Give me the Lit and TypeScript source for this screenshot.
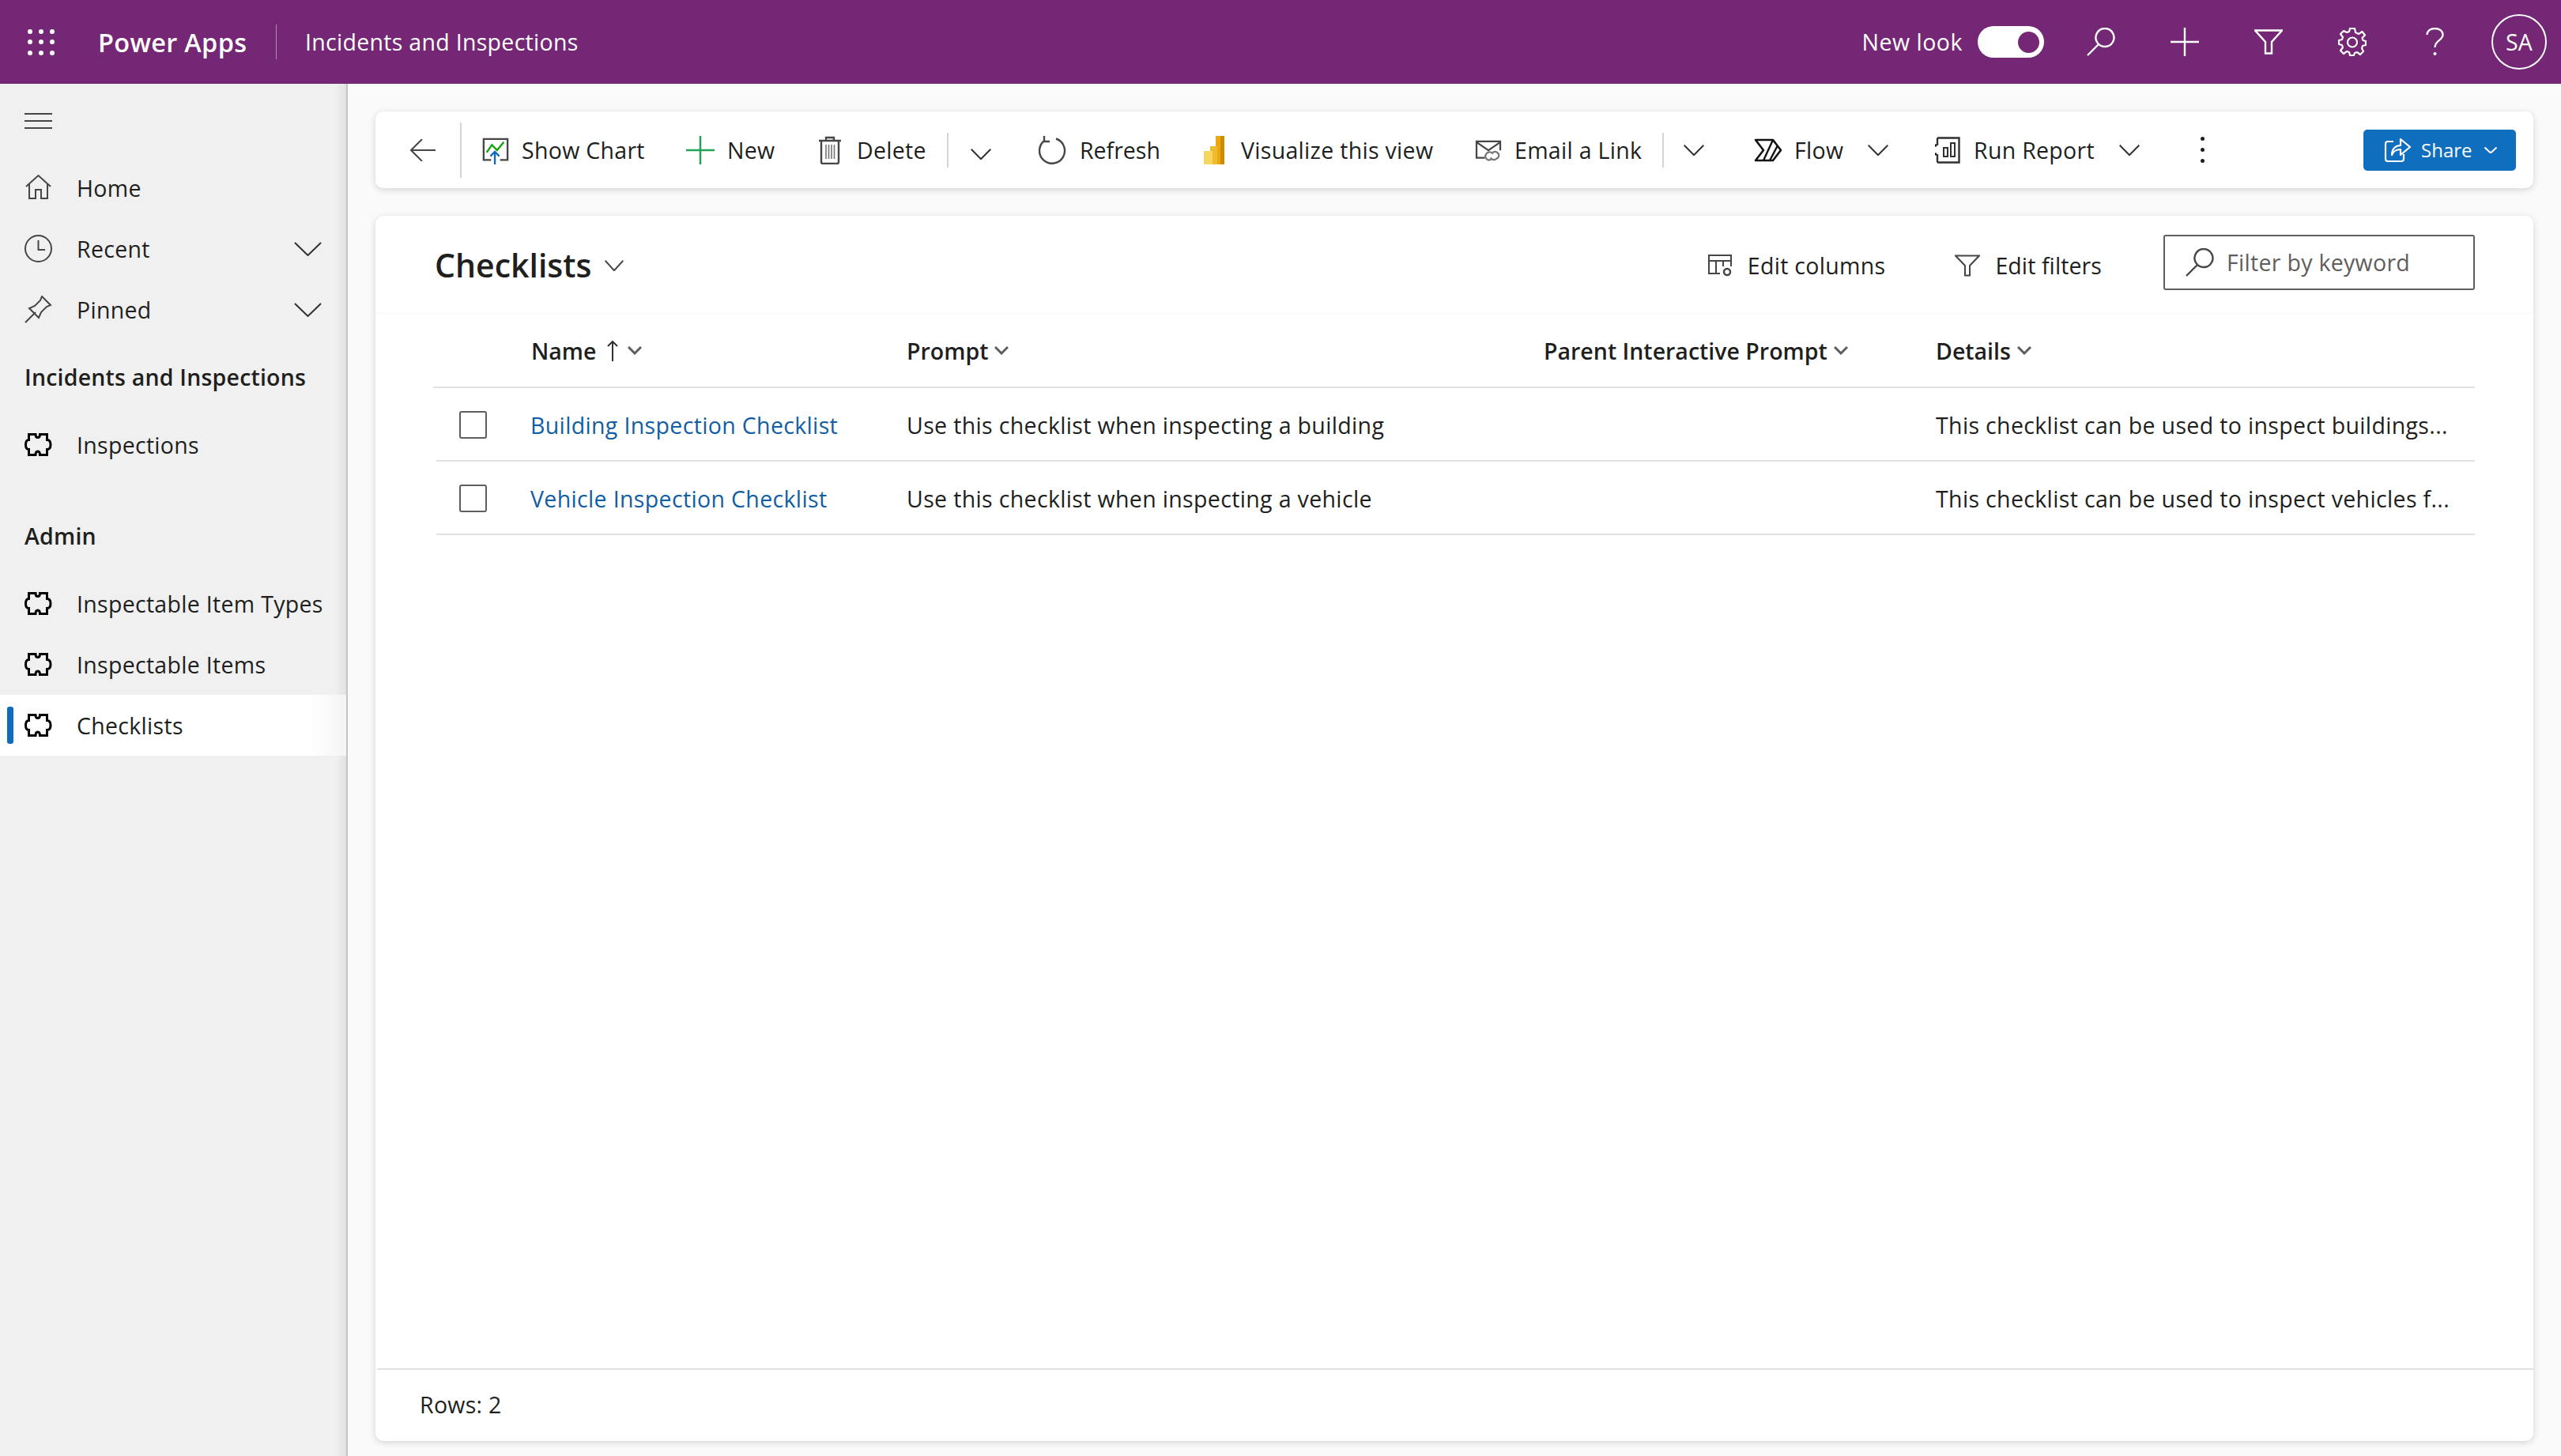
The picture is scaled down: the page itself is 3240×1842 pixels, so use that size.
import { LitElement, html, css, svg } from "lit";
import { customElement } from "lit/decorators.js";

const chevron = (w: number, h: number, c = "#323130") => html`<svg width=${w} height=${h} viewBox="0 0 36 18" preserveAspectRatio="none"><path d="M1 1 L18 17 L35 1" fill="none" stroke=${c} stroke-width="2" vector-effect="non-scaling-stroke"/></svg>`;

const puzzle = html`<svg width="35" height="29" viewBox="0 0 35 29"><path d="M5.500 1.500H14C14 4 15 5.500 16.800 5.500S19.500 4 19.500 1.500H28.500V8.500C31.500 8.500 33 11 33 14.500S31.500 20.500 28.500 20.500V27.500H19.500C19.500 25 18.600 23 16.800 23S14 25 14 27.500H5.500V20.500C3 20.500 1.500 18 1.500 14.500S3 8.500 5.500 8.500Z" fill="none" stroke="#000" stroke-width="3"/></svg>`;

const navIcons: Record<string, unknown> = {
  home: html`<svg width="35" height="35" viewBox="0 0 35 35"><path d="M2 16 17.500 2 33 16M6 13V31H14V20H21V31H29V13" fill="none" stroke="#484644" stroke-width="2"/></svg>`,
  clock: html`<svg width="35" height="35" viewBox="0 0 35 35"><circle cx="17.500" cy="17.500" r="16.500" fill="none" stroke="#484644" stroke-width="2"/><path d="M17.500 7V19H26" fill="none" stroke="#484644" stroke-width="2"/></svg>`,
  pin: html`<svg width="35" height="35" viewBox="0 0 35 35"><path d="M1 34 14 21M22 1 33 12 28 14 21 21 18 28 6 16 13 13 20 6Z" fill="none" stroke="#484644" stroke-width="2"/></svg>`,
  puzzle,
};

const cmdIcons: Record<string, unknown> = {
  chart: html`<svg width="34" height="34" viewBox="0 0 36 36" style="margin-top:2px"><path d="M12 30H2V2H34V30H24" fill="none" stroke="#484644" stroke-width="2.500"/><path d="M6 20 13 10 20 17 29 6" fill="none" stroke="#13a10e" stroke-width="2.500"/><path d="M17 36V19M11 25 17 19 23 25" fill="none" stroke="#0f6cbd" stroke-width="2.500"/></svg>`,
  plus: html`<svg width="36" height="36" viewBox="0 0 36 36"><path d="M18 0V36M0 18H36" fill="none" stroke="#22a356" stroke-width="2.500"/></svg>`,
  trash: html`<svg width="28" height="36" viewBox="0 0 28 36"><path d="M0 6H28M9 6V2H19V6M3 6V33C3 34 4 35 5 35H23C24 35 25 34 25 33V6" fill="none" stroke="#484644" stroke-width="2.400"/><path d="M9 11V29M12.500 11V29M16 11V29M19.500 11V29" fill="none" stroke="#757575" stroke-width="1.600"/></svg>`,
  refresh: html`<svg width="36" height="36" viewBox="0 0 36 36"><path d="M22 3.500A16 16 0 1 1 8 5.500M7 0V7H14" fill="none" stroke="#484644" stroke-width="2.400"/></svg>`,
  bi: html`<svg width="26" height="36" viewBox="0 0 26 36"><rect x="17" y="0" width="9" height="36" fill="#d08a00"/><rect x="15" y="0" width="6" height="36" fill="#e8a915"/><rect x="8" y="13" width="9" height="23" fill="#eebc2c"/><rect x="0" y="19" width="11" height="17" fill="#f6d860"/></svg>`,
  mail: html`<svg width="36" height="30" viewBox="0 0 36 32" style="margin-top:5px"><path d="M13 24H2V2H34V14M2 3 18 14 34 3" fill="none" stroke="#484644" stroke-width="2.400"/><path d="M24 19A5 5 0 0 0 17 17L15 19A5 5 0 0 0 22 26M21 24A5 5 0 0 0 28 26L31 24A5 5 0 0 0 24 17" fill="none" stroke="#757575" stroke-width="2.400"/></svg>`,
  flow: html`<svg width="36" height="30" viewBox="0 0 36 30"><path d="M2 2H24L34 15 24 28H2L12 15Z" fill="none" stroke="#111" stroke-width="2.600" stroke-linejoin="round"/><path d="M24 2 12 28M30 9 20 28" fill="none" stroke="#111" stroke-width="2.400"/></svg>`,
  report: html`<svg width="32" height="34" viewBox="0 0 32 34"><path d="M3 1.500H30.500V32.500H3M3 1.500V11M3 22V32.500" fill="none" stroke="#323130" stroke-width="2.400"/><path d="M2 11H0M2 22H0" stroke="#111" stroke-width="3"/><rect x="11" y="14" width="5" height="11" fill="none" stroke="#323130" stroke-width="2"/><rect x="20" y="8" width="5" height="17" fill="none" stroke="#323130" stroke-width="2"/></svg>`,
};

const search = (c: string) => svg`<path d="M15 21 1 35M23 1A11.500 11.500 0 1 1 22.900 1Z" fill="none" stroke=${c} stroke-width="2.400"/>`;

const commands = [
  { icon: "chart", label: "Show Chart", text: 50, w: 258 },
  { icon: "plus", label: "New", text: 52, w: 168 },
  { icon: "trash", label: "Delete", text: 48, w: 162 },
  { sep: true, w: 30 },
  { chev: true, drop: true, w: 86 },
  { icon: "refresh", label: "Refresh", text: 52, w: 209, tight: true },
  { icon: "bi", label: "Visualize this view", text: 47, w: 342 },
  { icon: "mail", label: "Email a Link", text: 51, w: 238 },
  { sep: true, w: 27 },
  { chev: true, w: 89 },
  { icon: "flow", label: "Flow", text: 51, chevAt: 144, w: 229 },
  { icon: "report", label: "Run Report", text: 49, chevAt: 233, w: 338 },
];

const rows = [
  { name: "Building Inspection Checklist", prompt: "Use this checklist when inspecting a building", details: "This checklist can be used to inspect buildings..." },
  { name: "Vehicle Inspection Checklist", prompt: "Use this checklist when inspecting a vehicle", details: "This checklist can be used to inspect vehicles f..." },
];

@customElement("app-root")
export class AppRoot extends LitElement {
  static styles = css`
    :host {
      display: block;
      width: 3240px;
      height: 1842px;
      overflow: hidden;
      background: #fafafa;
      font-family: "Open Sans", "Noto Sans", sans-serif;
      font-size: 28.500px;
      letter-spacing: .3px;
      color: #201f1e;
    }
    svg { display: block; flex: none; }

    .top {
      height: 106px;
      background: #742774;
      color: #fff;
      display: flex;
      align-items: center;
    }
    .waffle {
      margin-left: 35px;
      width: 34px;
      height: 33px;
      display: grid;
      grid-template-columns: repeat(3, 6px);
      grid-auto-rows: 6px;
      justify-content: space-between;
      align-content: space-between;
    }
    .waffle i { background: #fff; border-radius: 50%; }
    .brand { margin-left: 55px; width: 225px; font-weight: 600; font-size: 32.500px; letter-spacing: .3px; }
    .vsep { width: 1px; height: 44px; background: rgba(255,255,255,.45); }
    .app { margin-left: 36px; flex: 1; }
    .newlook { margin-right: 19px; letter-spacing: .5px; }
    .toggle {
      width: 84px;
      height: 40px;
      border-radius: 20px;
      background: #fff;
      display: flex;
      align-items: center;
      justify-content: flex-end;
      padding-right: 6px;
      box-sizing: border-box;
    }
    .toggle i { width: 27px; height: 27px; border-radius: 50%; background: #742774; }
    .ticons { display: flex; align-items: center; margin-left: 54px; }
    .ticons > * { margin-right: 70px; }
    .ticons > .gear { margin-right: 75px; }
    .ticons > .help { margin-right: 60px; }
    .avatar {
      width: 70px;
      height: 70px;
      margin: 0 18px 0 0;
      border: 2px solid #fff;
      border-radius: 50%;
      box-sizing: border-box;
      display: flex;
      align-items: center;
      justify-content: center;
    }

    .body { display: flex; height: 1736px; }
    .nav {
      width: 440px;
      flex: none;
      box-sizing: border-box;
      border-right: 2px solid #c4c4c4;
      background: linear-gradient(to right, #f0f0f0 calc(100% - 14px), #e2e2e2);
    }
    .burger {
      height: 93px;
      padding-left: 31px;
      display: flex;
      flex-direction: column;
      justify-content: center;
      gap: 7px;
    }
    .burger i { width: 35px; height: 2px; background: #484644; }
    .nitem {
      height: 77px;
      display: flex;
      align-items: center;
      position: relative;
      padding-left: 31px;
    }
    .nitem .ic { width: 66px; flex: none; }
    .nitem .lb { flex: 1; }
    .nitem .ch { margin-right: 31px; }
    .nitem.on { background: linear-gradient(to right, #fff 90%, #f4f4f4); }
    .nitem.on::before {
      content: "";
      position: absolute;
      left: 9px;
      top: 15px;
      width: 8px;
      height: 47px;
      border-radius: 3px;
      background: #0f6cbd;
    }
    .nhead {
      height: 94px;
      display: flex;
      align-items: center;
      padding-left: 31px;
      font-weight: 600;
      letter-spacing: .2px;
    }
    .nhead.second { margin-top: 30px; }

    .main {
      flex: 1;
      padding: 35px 35px 19px;
      box-sizing: border-box;
      display: flex;
      flex-direction: column;
      gap: 35px;
    }
    .cmdbar {
      height: 97px;
      flex: none;
      background: #fff;
      border-radius: 10px;
      box-shadow: 0 2px 8px rgba(0,0,0,.16);
      display: flex;
      align-items: center;
      padding-left: 44px;
      position: relative;
    }
    .back { width: 63px; }
    .sep { width: 2px; height: 70px; background: #d4d4d4; }
    .seps { height: 44px; }
    .cmd { display: flex; align-items: center; flex: none; position: relative; }
    .cmd .ic { flex: none; }
    .cmd .cch { position: absolute; top: 50%; margin-top: -7px; }
    .cmd .tight { letter-spacing: 0; }
    .drop { margin-top: 10px; }
    .kebab { display: flex; flex-direction: column; gap: 9px; margin-left: -2px; }
    .kebab i { width: 5px; height: 5px; border-radius: 50%; background: #201f1e; }
    .share {
      margin-left: auto;
      margin-right: 22px;
      width: 193px;
      height: 52px;
      background: #106ebe;
      border-radius: 5px;
      color: #fff;
      display: flex;
      align-items: center;
      padding-left: 26px;
      box-sizing: border-box;
      font-size: 24px;
      font-weight: 500;
      letter-spacing: 0;
    }

    .card {
      flex: 1;
      background: #fff;
      border-radius: 10px;
      box-shadow: 0 2px 8px rgba(0,0,0,.16);
      display: flex;
      flex-direction: column;
    }
    .chead {
      height: 124px;
      flex: none;
      box-sizing: border-box;
      border-bottom: 1px solid #f6f6f6;
      display: flex;
      align-items: center;
      padding-left: 75px;
    }
    .title { font-size: 41px; font-weight: 600; width: 215px; letter-spacing: 0; }
    .tchev { margin-top: 2px; }
    .hact { display: flex; align-items: center; gap: 19px; padding-top: 2px; }
    .hact.cols { margin-right: 88px; }
    .hact.filt { margin-right: 78px; letter-spacing: .1px; }
    .filter {
      width: 394px;
      height: 70px;
      margin: -6px 74px 0 0;
      border: 2px solid #605e5c;
      border-radius: 3px;
      box-sizing: border-box;
      display: flex;
      align-items: center;
      padding-left: 26px;
      gap: 16px;
      color: #605e5c;
    }
    .table { flex: 1; padding: 0 74px 0 73px; }
    .thead, .trow {
      display: grid;
      grid-template-columns: 124px 475px 806px 496px 1fr;
      align-items: center;
    }
    .thead { height: 92px; border-bottom: 2px solid #e1e1e1; font-weight: 600; letter-spacing: 0; }
    .thead > div { display: flex; align-items: center; padding-top: 1px; }
    .trow {
      height: 91px;
      box-sizing: content-box;
      border-bottom: 2px solid #e1e1e1;
      margin-left: 4px;
      grid-template-columns: 120px 475px 806px 496px 1fr;
      letter-spacing: .35px;
    }
    .trow > div { padding-top: 2px; }
    .box { width: 35px; height: 35px; margin-left: 29px; border: 2px solid #605e5c; border-radius: 3px; box-sizing: border-box; }
    .link { color: #115ea3; margin-left: -1px; }
    .tfoot {
      height: 92px;
      flex: none;
      box-sizing: border-box;
      border-top: 2px solid #e1e1e1;
      display: flex;
      align-items: center;
      padding: 0 0 3px 54px;
      margin-left: 2px;
    }
  `;

  private _nav(icon: string, label: string, opts: { chev?: boolean; on?: boolean } = {}) {
    return html`<div class="nitem ${opts.on ? "on" : ""}">
      <div class="ic">${navIcons[icon]}</div>
      <div class="lb">${label}</div>
      ${opts.chev ? html`<div class="ch">${chevron(35, 18)}</div>` : ""}
    </div>`;
  }

  private _cmd(c: any) {
    if (c.sep) return html`<div class="cmd" style="width:${c.w}px"><div class="sep seps"></div></div>`;
    if (c.chev) return html`<div class="cmd ${c.drop ? "drop" : ""}" style="width:${c.w}px">${chevron(26, 14)}</div>`;
    return html`<div class="cmd" style="width:${c.w}px">
      <div class="ic" style="width:${c.text}px">${cmdIcons[c.icon]}</div>
      <span class=${c.tight ? "tight" : ""}>${c.label}</span>
      ${c.chevAt ? html`<div class="cch" style="left:${c.chevAt}px">${chevron(26, 14)}</div>` : ""}
    </div>`;
  }

  render() {
    return html`
      <div class="top">
        <div class="waffle">${Array.from({ length: 9 }, () => html`<i></i>`)}</div>
        <div class="brand">Power Apps</div>
        <div class="vsep"></div>
        <div class="app">Incidents and Inspections</div>
        <div class="newlook">New look</div>
        <div class="toggle"><i></i></div>
        <div class="ticons">
          <svg width="36" height="36" viewBox="0 0 36 36">${search("#fff")}</svg>
          <svg width="36" height="36" viewBox="0 0 36 36"><path d="M18 0V36M0 18H36" stroke="#fff" stroke-width="2.400"/></svg>
          <svg width="36" height="32" viewBox="0 0 36 32"><path d="M1 1.500H35L22 16V30.500H14V16Z" fill="none" stroke="#fff" stroke-width="2.400"/></svg>
          <svg class="gear" width="36" height="36" viewBox="0 0 36 36"><path d="M15 1H21L22 6 26 8 30.500 5 34 9.500 30.500 13 31.500 16 35 17V22L31 23 30 26 32 30 28 34 24 31 21 32 20 35H15L14 31 11 30 7 33 3 29 6 25 5 22 1 21V16L5 15 6 12 3 8 7 4 11 6 14 5Z" fill="none" stroke="#fff" stroke-width="2.200" stroke-linejoin="round"/><circle cx="18" cy="18.500" r="6" fill="none" stroke="#fff" stroke-width="2.200"/></svg>
          <svg class="help" width="23" height="36" viewBox="0 0 23 36"><path d="M1.500 9C1.500 4 6 1 11.500 1S21.500 4 21.500 9C21.500 16 11.500 16 11.500 25" fill="none" stroke="#fff" stroke-width="2.300"/><circle cx="11.500" cy="33" r="2" fill="#fff"/></svg>
        </div>
        <div class="avatar">SA</div>
      </div>
      <div class="body">
        <div class="nav">
          <div class="burger"><i></i><i></i><i></i></div>
          ${this._nav("home", "Home")}
          ${this._nav("clock", "Recent", { chev: true })}
          ${this._nav("pin", "Pinned", { chev: true })}
          <div class="nhead">Incidents and Inspections</div>
          ${this._nav("puzzle", "Inspections")}
          <div class="nhead second">Admin</div>
          ${this._nav("puzzle", "Inspectable Item Types")}
          ${this._nav("puzzle", "Inspectable Items")}
          ${this._nav("puzzle", "Checklists", { on: true })}
        </div>
        <div class="main">
          <div class="cmdbar">
            <div class="back"><svg width="32" height="28" viewBox="0 0 32 28"><path d="M32 14H1M15 0 1 14 15 28" fill="none" stroke="#484644" stroke-width="2"/></svg></div>
            <div class="sep"></div>
            <div style="width:26px"></div>
            ${commands.map((c) => this._cmd(c))}
            <div class="kebab"><i></i><i></i><i></i></div>
            <div class="share">
              <svg width="34" height="32" viewBox="0 0 34 32" style="margin-right:13px"><path d="M12 5H5C3 5 2 6 2 8V27C2 29 3 30 5 30H22C24 30 25 29 25 27V21M10 22C10 14 15 10 21 10V2L33 12 21 22V15C16 15 12 17 10 22Z" fill="none" stroke="#fff" stroke-width="2.200" stroke-linejoin="round"/></svg>
              <span>Share</span>
              <div style="margin-left:15px">${chevron(16, 8, "#fff")}</div>
            </div>
          </div>
          <div class="card">
            <div class="chead">
              <div class="title">Checklists</div>
              <div class="tchev">${chevron(24, 14, "#484644")}</div>
              <div style="flex:1"></div>
              <div class="hact cols">
                <svg width="32" height="30" viewBox="0 0 32 30"><path d="M30 16V2H2V25H16M2 9H30M11 9V25M20 9V16" fill="none" stroke="#484644" stroke-width="2"/><circle cx="25" cy="23" r="4" fill="none" stroke="#484644" stroke-width="2.500"/></svg>
                <span>Edit columns</span>
              </div>
              <div class="hact filt">
                <svg width="32" height="28" viewBox="0 0 32 28"><path d="M1 1.500H31L19 14V26.500H13V14Z" fill="none" stroke="#484644" stroke-width="2"/></svg>
                <span>Edit filters</span>
              </div>
              <div class="filter">
                <svg width="36" height="36" viewBox="0 0 36 36">${search("#484644")}</svg>
                <span>Filter by keyword</span>
              </div>
            </div>
            <div class="table">
              <div class="thead">
                <div></div>
                <div>Name
                  <svg style="margin-left:14px" width="14" height="26" viewBox="0 0 14 26"><path d="M7 26V1M1 7 7 1 13 7" fill="none" stroke="#323130" stroke-width="2"/></svg>
                  <svg style="margin-left:12px" width="18" height="11" viewBox="0 0 18 11"><path d="M1 1 9 9 17 1" fill="none" stroke="#605e5c" stroke-width="3"/></svg>
                </div>
                <div>Prompt<svg style="margin-left:8px" width="18" height="11" viewBox="0 0 18 11"><path d="M1 1 9 9 17 1" fill="none" stroke="#605e5c" stroke-width="3"/></svg></div>
                <div>Parent Interactive Prompt<svg style="margin-left:8px" width="18" height="11" viewBox="0 0 18 11"><path d="M1 1 9 9 17 1" fill="none" stroke="#605e5c" stroke-width="3"/></svg></div>
                <div>Details<svg style="margin-left:8px" width="18" height="11" viewBox="0 0 18 11"><path d="M1 1 9 9 17 1" fill="none" stroke="#605e5c" stroke-width="3"/></svg></div>
              </div>
              ${rows.map((r) => html`<div class="trow">
                <div><div class="box"></div></div>
                <div class="link">${r.name}</div>
                <div>${r.prompt}</div>
                <div></div>
                <div>${r.details}</div>
              </div>`)}
            </div>
            <div class="tfoot">Rows: 2</div>
          </div>
        </div>
      </div>
    `;
  }
}
